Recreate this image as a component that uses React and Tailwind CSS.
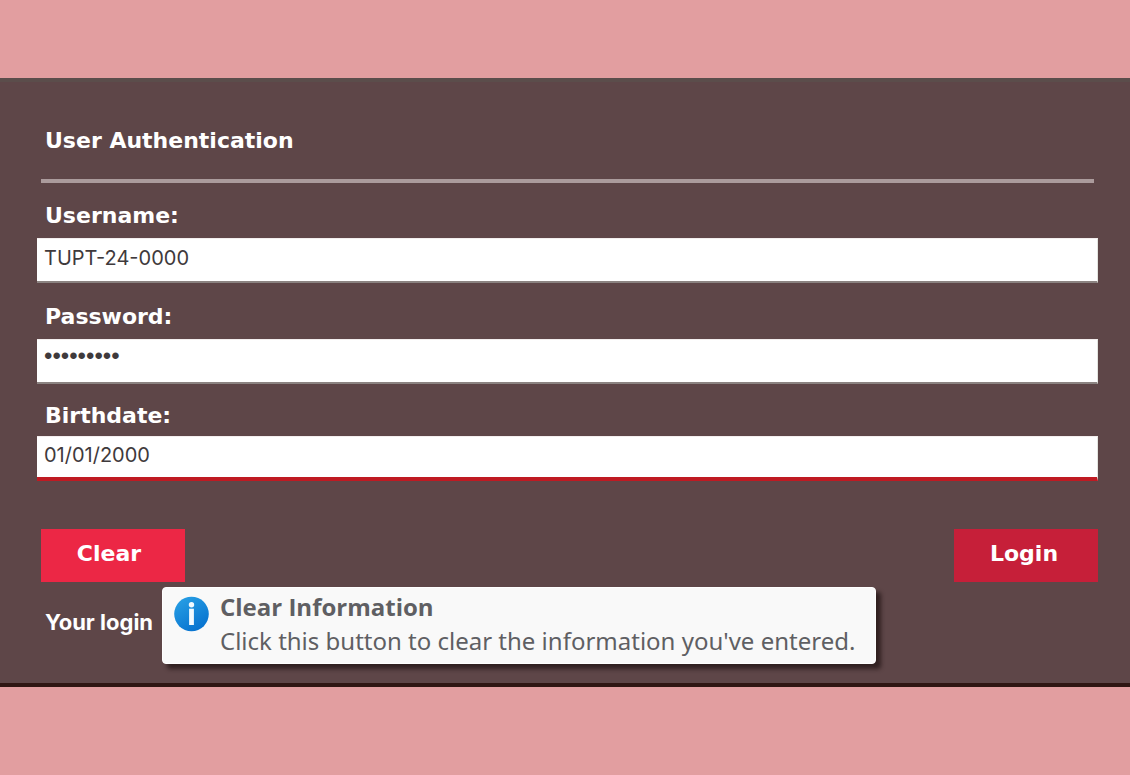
import { useState } from "react";

const inputBase =
  "block w-full h-[45px] rounded-none bg-white pl-[7px] pr-2 text-[#3f3a3c] outline-none border-t border-t-[#f3eeee] border-r border-r-[#e3e5e0]";

const wideText = "font-['DejaVu_Sans',sans-serif] text-[22px] leading-7 font-bold text-white";

function Field({ id, label, className, children }) {
  return (
    <div className={`flex flex-col ${className}`}>
      <label htmlFor={id} className={`pl-2 ${wideText}`}>
        {label}
      </label>
      {children}
    </div>
  );
}

function InfoIcon() {
  return (
    <svg viewBox="0 0 36 36" className="size-9 shrink-0" aria-hidden="true">
      <defs>
        <linearGradient id="info-fill" x1="0" y1="0" x2="0.6" y2="1">
          <stop offset="0" stopColor="#2ba3e6" />
          <stop offset="1" stopColor="#0874d0" />
        </linearGradient>
      </defs>
      <circle cx="17.5" cy="18" r="17.3" fill="url(#info-fill)" />
      <circle cx="17.5" cy="8.8" r="2.7" fill="#f2faff" />
      <rect x="15.1" y="12.7" width="4.8" height="16.3" fill="#f2faff" />
    </svg>
  );
}

export default function App() {
  const [username, setUsername] = useState("TUPT-24-0000");
  const [password, setPassword] = useState("tupt12345");
  const [birthdate, setBirthdate] = useState("01/01/2000");

  const clear = () => {
    setUsername("");
    setPassword("");
    setBirthdate("");
  };

  return (
    <main className="min-h-screen bg-[#e29ea0] pt-[78px] pb-[88px] font-[Inter,sans-serif]">
      <form
        onSubmit={(e) => e.preventDefault()}
        className="border-t-4 border-t-[#5b4d4b] border-b-4 border-b-[#2f1613] bg-[#5e4648] pt-[45px] pr-8 pb-[47px] pl-[37px]"
      >
        <h1 className={`pl-2 ${wideText}`}>User Authentication</h1>
        <hr className="mt-6 mr-1 ml-1 border-0 border-t-4 border-[#ab9b9c]" />

        <Field id="username" label="Username:" className="mt-[19px] gap-2">
          <input
            id="username"
            type="text"
            value={username}
            onChange={(e) => setUsername(e.target.value)}
            className={`${inputBase} border-b-2 border-b-[#8b8381] pb-1 text-xl`}
          />
        </Field>
        <Field id="password" label="Password:" className="mt-5 gap-2">
          <input
            id="password"
            type="password"
            value={password}
            onChange={(e) => setPassword(e.target.value)}
            className={`${inputBase} border-b-2 border-b-[#8b8381] pb-2.5 font-['Liberation_Sans',sans-serif] text-2xl`}
          />
        </Field>
        <Field id="birthdate" label="Birthdate:" className="mt-[18px] gap-1.5">
          <input
            id="birthdate"
            type="text"
            value={birthdate}
            onChange={(e) => setBirthdate(e.target.value)}
            className={`${inputBase} border-b-4 border-b-[#bf1a22] pb-1 text-xl`}
          />
        </Field>

        <div className="mt-12 flex items-start justify-between pl-1">
          <div className="relative">
            <button
              type="button"
              onClick={clear}
              aria-describedby="clear-tip"
              className={`h-[53px] w-36 bg-[#ec2745] pr-2 pb-1 ${wideText}`}
            >
              Clear
            </button>
            <div
              id="clear-tip"
              role="tooltip"
              className="absolute top-[58px] left-[121px] z-10 flex h-[77px] w-max items-start gap-2.5 rounded-[4px] border border-white bg-[#f9f9f9] pt-0.5 pr-5 pl-[11px] font-['Noto_Sans',sans-serif] text-2xl leading-[34px] text-[#5f5f63] shadow-[5px_5px_4px_rgba(25,12,12,0.65)]"
            >
              <div className="pt-1.5">
                <InfoIcon />
              </div>
              <div>
                <p className="font-['Open_Sans',sans-serif] font-bold">Clear Information</p>
                <p>Click this button to clear the information you've entered.</p>
              </div>
            </div>
          </div>
          <button type="submit" className={`h-[53px] w-36 bg-[#c61f39] pr-1 pb-1 ${wideText}`}>
            Login
          </button>
        </div>

        <p className="mt-[26px] pl-2 text-[22px] leading-7 font-bold text-white">Your login</p>
      </form>
    </main>
  );
}
